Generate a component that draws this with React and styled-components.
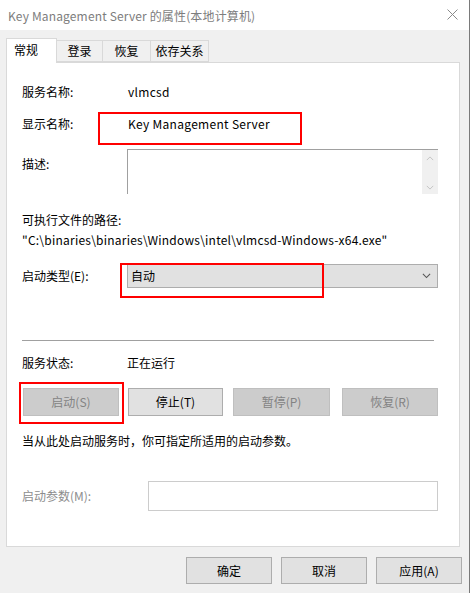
import React from "react";
import styled, { createGlobalStyle } from "styled-components";

const GlobalStyle = createGlobalStyle`
  html, body {
    margin: 0;
    padding: 0;
    background: #f0f0f0;
  }
  body {
    font-family: "Noto Sans CJK SC", "Microsoft YaHei", sans-serif;
    font-size: 12px;
    color: #000;
  }
`;

const Window = styled.div`
  width: 469px;
  height: 593px;
  background: #f0f0f0;
  border-right: 1px solid #7a7a7a;
  display: flex;
  flex-direction: column;
  overflow: hidden;
`;

const TitleBar = styled.div`
  height: 30px;
  background: #fff;
  display: flex;
  align-items: center;
  justify-content: space-between;
  padding: 0 11px 0 8px;
  color: #7d7d7d;
  font-size: 12px;
  letter-spacing: 0.15px;
`;

const Close = styled.svg`
  width: 11px;
  height: 11px;
  margin-top: -2px;
`;

const TabStrip = styled.div`
  display: flex;
  align-items: flex-end;
  margin: 8px 0 0 6px;
  height: 24px;
  position: relative;
  z-index: 1;
`;

const Tab = styled.div`
  box-sizing: border-box;
  width: ${(p) => p.$w}px;
  height: ${(p) => (p.$active ? 25 : 22)}px;
  margin-bottom: ${(p) => (p.$active ? -1 : 0)}px;
  background: ${(p) => (p.$active ? "#fff" : "#f0f0f0")};
  border: 1px solid #d9d9d9;
  border-bottom: ${(p) => (p.$active ? "none" : "1px solid #d9d9d9")};
  border-left: ${(p) => (p.$active ? "1px solid #d9d9d9" : "none")};
  display: flex;
  align-items: center;
  justify-content: ${(p) => (p.$active ? "flex-start" : "center")};
  padding-left: ${(p) => (p.$active ? 7 : 0)}px;
  padding-bottom: ${(p) => (p.$active ? 3 : 0)}px;
  line-height: 1;
`;

const Panel = styled.div`
  box-sizing: border-box;
  margin-left: 6px;
  width: 454px;
  height: 485px;
  background: #fff;
  border: 1px solid #d9d9d9;
  padding: 0 21px 0 15px;
  display: flex;
  flex-direction: column;
`;

const Row = styled.div`
  position: relative;
  display: grid;
  grid-template-columns: ${(p) => p.$label || 105}px 1fr;
  align-items: ${(p) => p.$align || "center"};
  height: ${(p) => p.$h || 20}px;
  margin-top: ${(p) => p.$mt || 0}px;
  line-height: 20px;
  white-space: nowrap;
`;

const Label = styled.span`
  color: ${(p) => (p.$disabled ? "#8d8d8d" : "#000")};
  padding-top: ${(p) => p.$pt || 0}px;
`;

const Value = styled.span`
  letter-spacing: ${(p) => p.$ls || 0}px;
`;

const Line = styled.div`
  height: 20px;
  line-height: 20px;
  margin-top: ${(p) => p.$mt || 0}px;
  white-space: nowrap;
  letter-spacing: ${(p) => p.$ls || 0}px;
`;

const TextArea = styled.div`
  box-sizing: border-box;
  height: 45px;
  border-top: 1px solid #a0a0a0;
  border-left: 1px solid #a0a0a0;
  display: flex;
  justify-content: flex-end;
`;

const ScrollBar = styled.div`
  width: 16px;
  background: #f0f0f0;
  display: flex;
  flex-direction: column;
  align-items: center;
  justify-content: space-between;
  padding: 6px 0 4px;
`;

const Select = styled.div`
  box-sizing: border-box;
  height: 24px;
  background: #e1e1e1;
  border: 1px solid #adadad;
  display: flex;
  align-items: center;
  justify-content: space-between;
  padding: 0 6px 0 3px;
`;

const Separator = styled.div`
  height: 1px;
  background: #a0a0a0;
  margin: 52px 4px 0 0;
`;

const ButtonRow = styled.div`
  position: relative;
  display: flex;
  margin: 15px 0 0 1px;
`;

const Button = styled.div`
  box-sizing: border-box;
  width: ${(p) => p.$w || 96}px;
  height: ${(p) => p.$h || 28}px;
  margin-left: ${(p) => p.$ml || 0}px;
  background: ${(p) => (p.$disabled ? "#cccccc" : "#e1e1e1")};
  border: 1px solid ${(p) => (p.$disabled ? "#bfbfbf" : "#adadad")};
  color: ${(p) => (p.$disabled ? "#838383" : "#000")};
  display: flex;
  align-items: center;
  justify-content: center;
  line-height: 1;
`;

const Input = styled.div`
  box-sizing: border-box;
  height: 30px;
  border: 1px solid #cccccc;
  background: #fff;
`;

const RedBox = styled.div`
  position: absolute;
  box-sizing: border-box;
  border: 2px solid #ff0000;
  left: ${(p) => p.$x}px;
  top: ${(p) => p.$y}px;
  width: ${(p) => p.$w}px;
  height: ${(p) => p.$h}px;
  pointer-events: none;
`;

const Footer = styled.div`
  display: flex;
  justify-content: flex-end;
  gap: 9px;
  padding-right: 7px;
  margin-top: 10px;
`;

const Chevron = ({ dir = "down", color = "#555", size = 9 }) => (
  <svg width={size} height={size / 2 + 1} viewBox="0 0 10 6">
    <path
      d={dir === "down" ? "M1 1 L5 5 L9 1" : "M1 5 L5 1 L9 5"}
      fill="none"
      stroke={color}
      strokeWidth="1.2"
    />
  </svg>
);

export default function App() {
  return (
    <>
      <GlobalStyle />
      <Window>
        <TitleBar>
          <span>Key Management Server 的属性(本地计算机)</span>
          <Close viewBox="0 0 11 11">
            <path d="M0.5 0.5 L10.5 10.5 M10.5 0.5 L0.5 10.5" stroke="#8a8a8a" strokeWidth="1" />
          </Close>
        </TitleBar>

        <TabStrip>
          <Tab $active $w={51}>常规</Tab>
          <Tab $w={46}>登录</Tab>
          <Tab $w={48}>恢复</Tab>
          <Tab $w={58}>依存关系</Tab>
        </TabStrip>

        <Panel>
          <Row $mt={19} $label={106}>
            <Label>服务名称:</Label>
            <Value $ls={0.3}>vlmcsd</Value>
          </Row>
          <Row $mt={12} $label={106}>
            <Label>显示名称:</Label>
            <Value $ls={0.3}>Key Management Server</Value>
            <RedBox $x={76} $y={-2} $w={204} $h={33} />
          </Row>
          <Row $mt={15} $h={45} $align="start">
            <Label $pt={5}>描述:</Label>
            <TextArea>
              <ScrollBar>
                <Chevron dir="up" color="#c2c2c2" size={8} />
                <Chevron dir="down" color="#c2c2c2" size={8} />
              </ScrollBar>
            </TextArea>
          </Row>
          <Line $mt={16}>可执行文件的路径:</Line>
          <Line $ls={0.23}>"C:\binaries\binaries\Windows\intel\vlmcsd-Windows-x64.exe"</Line>
          <Row $mt={14} $h={24}>
            <Label>启动类型(E):</Label>
            <Select>
              <span>自动</span>
              <Chevron />
            </Select>
            <RedBox $x={98} $y={-1} $w={204} $h={35} />
          </Row>
          <Separator />
          <Row $mt={12}>
            <Label>服务状态:</Label>
            <Value>正在运行</Value>
          </Row>
          <ButtonRow>
            <Button $disabled>启动(S)</Button>
            <Button $w={95} $ml={9}>停止(T)</Button>
            <Button $disabled $w={97} $ml={10}>暂停(P)</Button>
            <Button $disabled $ml={12}>恢复(R)</Button>
            <RedBox $x={-4} $y={-6} $w={105} $h={42} />
          </ButtonRow>
          <Line $mt={15}>当从此处启动服务时，你可指定所适用的启动参数。</Line>
          <Row $mt={30} $h={30} $label={126}>
            <Label $disabled>启动参数(M):</Label>
            <Input />
          </Row>
        </Panel>

        <Footer>
          <Button $w={86} $h={27}>确定</Button>
          <Button $w={86} $h={27}>取消</Button>
          <Button $w={86} $h={27}>应用(A)</Button>
        </Footer>
      </Window>
    </>
  );
}
